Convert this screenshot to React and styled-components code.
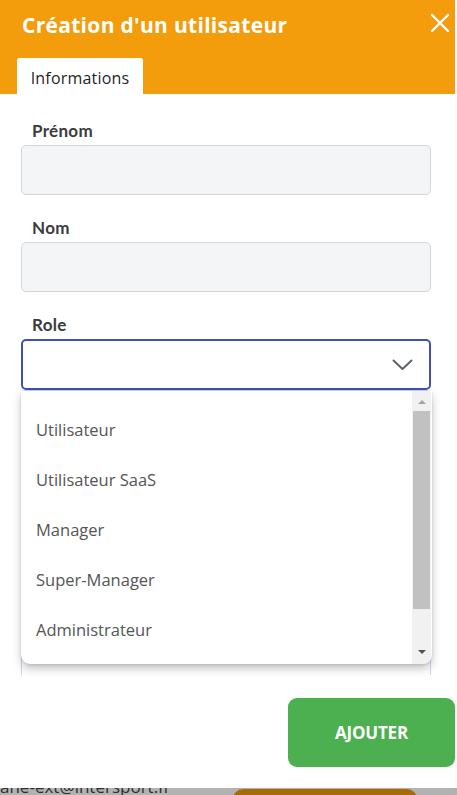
import React from "react";
import styled, { createGlobalStyle } from "styled-components";

const GlobalStyle = createGlobalStyle`
  html, body {
    margin: 0;
    padding: 0;
    background: #ffffff;
  }
  * {
    box-sizing: border-box;
  }
`;

const Page = styled.div`
  width: 457px;
  height: 795px;
  overflow: hidden;
  display: flex;
  flex-direction: column;
  background: #fbfbfb;
`;

const Modal = styled.section`
  width: 455px;
  height: 788px;
  display: flex;
  flex-direction: column;
  background: #ffffff;
`;

const Header = styled.header`
  height: 94px;
  background: #f39c0c;
  display: flex;
  flex-direction: column;
  justify-content: space-between;
  padding: 10px 0 0 17px;
`;

const TitleRow = styled.div`
  display: flex;
  align-items: center;
  justify-content: space-between;
  padding-left: 5px;
  padding-right: 4px;
`;

const Title = styled.h1`
  margin: 0;
  font-family: "Open Sans", "Noto Sans", sans-serif;
  font-weight: 700;
  font-size: 21px;
  line-height: 30px;
  color: #ffffff;
  letter-spacing: 0.3px;
`;

const CloseButton = styled.button`
  border: none;
  background: none;
  padding: 0;
  width: 22px;
  height: 22px;
  display: flex;
  align-items: center;
  justify-content: center;
  cursor: pointer;
  margin-top: -4px;
`;

const Tab = styled.div`
  align-self: flex-start;
  width: 126px;
  height: 36px;
  background: #ffffff;
  border-radius: 3px 3px 0 0;
  display: flex;
  align-items: center;
  justify-content: center;
  font-family: "Open Sans", "Noto Sans", sans-serif;
  font-size: 16px;
  letter-spacing: 0.2px;
  color: #1f1f1f;
  padding-top: 4px;
`;

const Body = styled.div`
  flex: 1;
  padding: 27px 24px 0 21px;
  display: flex;
  flex-direction: column;
`;

const Field = styled.div`
  margin-bottom: ${(p) => (p.$last ? "0" : "23px")};
`;

const Label = styled.label`
  display: block;
  font-family: "Lato", "Open Sans", sans-serif;
  font-weight: 700;
  font-size: 17px;
  line-height: 20px;
  letter-spacing: 0.3px;
  color: #3b3b3b;
  padding-left: 11px;
  margin-bottom: 4px;
`;

const Input = styled.div`
  height: 50px;
  background: #f4f5f7;
  border: 1px solid #d3d6db;
  border-radius: 5px;
`;

const SelectWrap = styled.div`
  position: relative;
  margin-top: 1px;
`;

const Select = styled.div`
  height: 51px;
  background: #ffffff;
  border: 2px solid #3f51b5;
  border-radius: 5px;
  display: flex;
  align-items: center;
  justify-content: flex-end;
  padding-right: 16px;
`;

const Menu = styled.ul`
  position: absolute;
  top: calc(100% + 1px);
  left: 0;
  right: -1px;
  margin: 0;
  padding: 13px 0 10px;
  list-style: none;
  background: #ffffff;
  border-radius: 0 0 9px 9px;
  box-shadow: 0 5px 10px rgba(0, 0, 0, 0.22), 0 1px 3px rgba(0, 0, 0, 0.12);
  z-index: 2;
  overflow: hidden;
`;

const Item = styled.li`
  height: 50px;
  display: flex;
  align-items: center;
  padding-left: 15px;
  font-family: "Open Sans", "Noto Sans", sans-serif;
  font-size: 16.5px;
  color: #555555;
`;

const Scrollbar = styled.div`
  position: absolute;
  top: 0;
  right: 1px;
  bottom: 0;
  width: 19px;
  background: #f1f1f1;
  display: flex;
  flex-direction: column;
  align-items: center;
  padding: 9px 0 10px;
`;

const Thumb = styled.div`
  width: 17px;
  height: 198px;
  margin-top: 7px;
  background: #c1c1c1;
`;

const Arrow = styled.div`
  width: 0;
  height: 0;
  border-left: 4px solid transparent;
  border-right: 4px solid transparent;
  ${(p) =>
    p.$down
      ? `border-top: 4px solid #505050; margin-top: auto;`
      : `border-bottom: 4px solid #a3a3a3;`}
`;

const HiddenBox = styled.div`
  height: 285px;
  border: 1px solid #d0d3ee;
  border-bottom: none;
  border-radius: 5px 5px 0 0;
`;

const Footer = styled.footer`
  display: flex;
  justify-content: flex-end;
  padding: 0 0 21px;
`;

const AddButton = styled.button`
  width: 167px;
  height: 69px;
  border: none;
  border-radius: 9px;
  background: #4caf50;
  color: #ffffff;
  font-family: "Open Sans", "Noto Sans", sans-serif;
  font-weight: 700;
  font-size: 17px;
  letter-spacing: -0.2px;
  cursor: pointer;
`;

const Backdrop = styled.div`
  height: 7px;
  background: #b2b2b2;
  display: flex;
  align-items: flex-start;
  overflow: hidden;
`;

const BackdropText = styled.span`
  width: 233px;
  flex-shrink: 0;
  margin-top: -11px;
  font-family: "Open Sans", sans-serif;
  font-size: 17px;
  line-height: 20px;
  color: #2e2e2e;
  white-space: nowrap;
  overflow: hidden;
`;

const BackdropButton = styled.div`
  width: 184px;
  height: 20px;
  margin-top: 1px;
  background: #a86a08;
  border-radius: 10px 10px 0 0;
`;

const roles = [
  "Utilisateur",
  "Utilisateur SaaS",
  "Manager",
  "Super-Manager",
  "Administrateur",
];

export default function App() {
  return (
    <>
      <GlobalStyle />
      <Page>
        <Modal>
          <Header>
            <TitleRow>
              <Title>Création d'un utilisateur</Title>
              <CloseButton aria-label="Fermer">
                <svg width="20" height="20" viewBox="0 0 20 20">
                  <path
                    d="M2 2 L18 18 M18 2 L2 18"
                    stroke="#ffffff"
                    strokeWidth="2.4"
                    strokeLinecap="round"
                  />
                </svg>
              </CloseButton>
            </TitleRow>
            <Tab>Informations</Tab>
          </Header>
          <Body>
            <Field>
              <Label>Prénom</Label>
              <Input />
            </Field>
            <Field>
              <Label>Nom</Label>
              <Input />
            </Field>
            <Field $last>
              <Label>Role</Label>
              <SelectWrap>
                <Select>
                  <svg width="21" height="12" viewBox="0 0 21 12">
                    <path
                      d="M1.5 1.5 L10.5 10 L19.5 1.5"
                      fill="none"
                      stroke="#5b6370"
                      strokeWidth="2"
                      strokeLinecap="round"
                      strokeLinejoin="round"
                    />
                  </svg>
                </Select>
                <Menu>
                  {roles.map((r) => (
                    <Item key={r}>{r}</Item>
                  ))}
                  <Scrollbar>
                    <Arrow />
                    <Thumb />
                    <Arrow $down />
                  </Scrollbar>
                </Menu>
              </SelectWrap>
            </Field>
            <HiddenBox />
          </Body>
          <Footer>
            <AddButton>AJOUTER</AddButton>
          </Footer>
        </Modal>
        <Backdrop>
          <BackdropText>ane-ext@intersport.fr</BackdropText>
          <BackdropButton />
        </Backdrop>
      </Page>
    </>
  );
}
